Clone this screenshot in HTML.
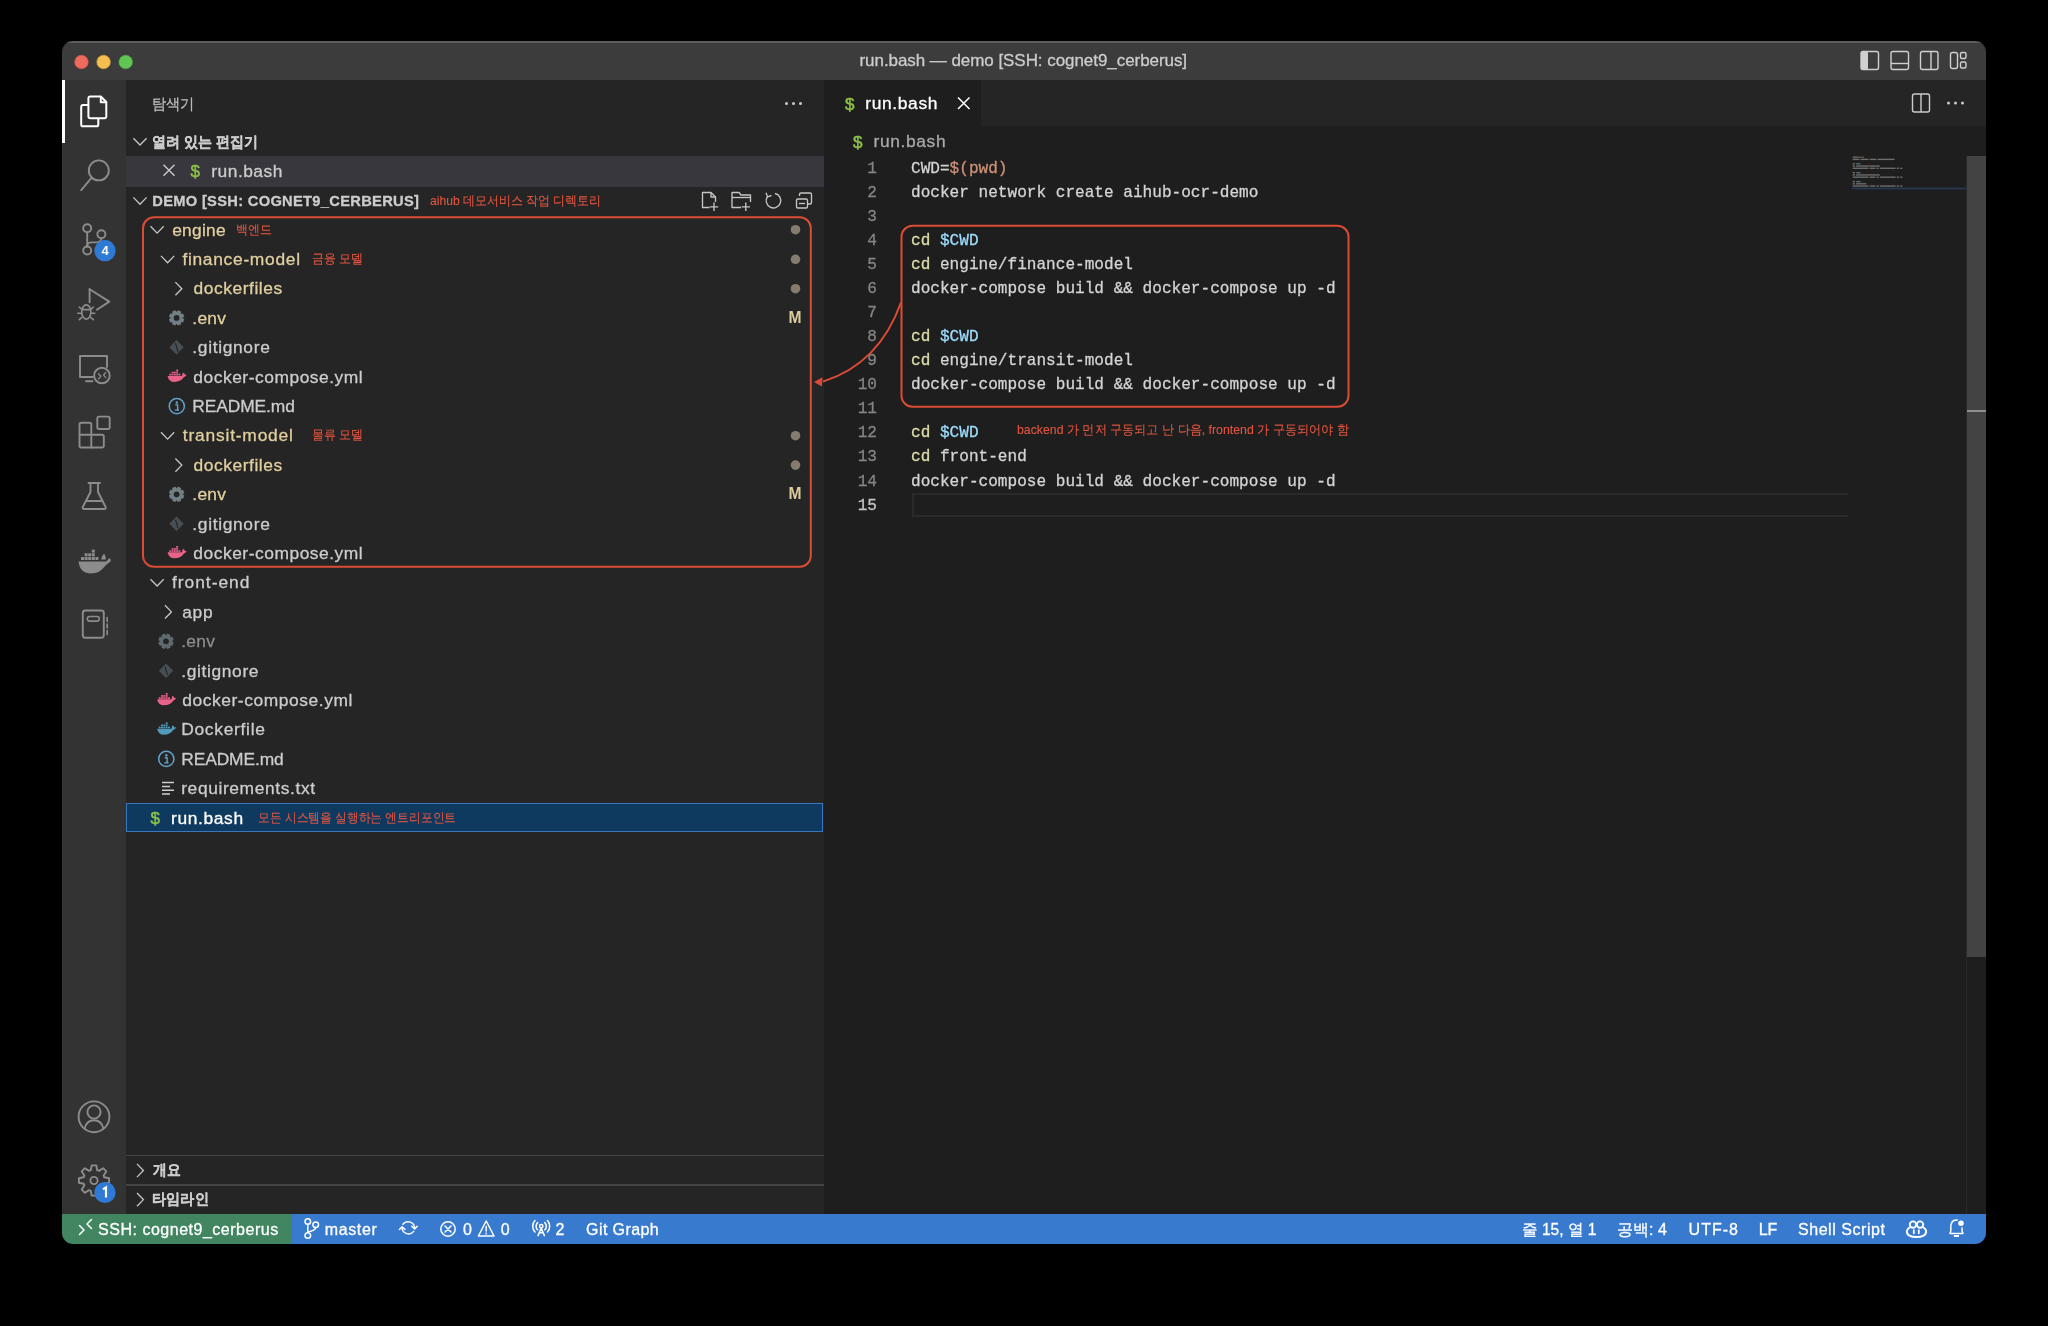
<!DOCTYPE html><html><head><meta charset='utf-8'><style>
*{box-sizing:border-box}
html,body{margin:0;padding:0;background:#000;width:2048px;height:1326px;overflow:hidden}
#win{position:absolute;left:0;top:0;width:2048px;height:1326px;clip-path:inset(41px 62px 82px 62px round 11px);will-change:transform}
.a{position:absolute}
.t{position:absolute;height:40px;line-height:40px;white-space:pre;-webkit-text-stroke:0.3px currentColor}
.a{-webkit-text-stroke:0.3px currentColor}
svg{position:absolute;overflow:visible}
</style></head><body><div id=win>
<div class=a style="left:62px;top:41px;width:1924px;height:39px;background:#3c3c3c;"></div>
<div class=a style="left:62px;top:41px;width:1924px;height:1.5px;background:#5e5e5e;"></div>
<div class=a style="left:62px;top:80px;width:63.5px;height:1134px;background:#333333;"></div>
<div class=a style="left:125.5px;top:80px;width:698.0px;height:1134px;background:#252526;"></div>
<div class=a style="left:823.5px;top:80px;width:1162.5px;height:1134px;background:#1e1e1e;"></div>
<div class=a style="left:823.5px;top:80px;width:1162.5px;height:45.599999999999994px;background:#252526;"></div>
<div class=a style="left:823.5px;top:80px;width:157.70000000000005px;height:45.599999999999994px;background:#1e1e1e;"></div>
<div class=a style="left:62px;top:1214px;width:1924px;height:30px;background:#387ace;"></div>
<div class=a style="left:62px;top:1214px;width:229.7px;height:30px;background:#418660;"></div>
<div class=a style="left:62px;top:80px;width:3px;height:63px;background:#ffffff;"></div>
<div class=a style="left:125.5px;top:156.4px;width:698.0px;height:30.400000000000006px;background:#37373d;"></div>
<div class=a style="left:126px;top:802.5px;width:697px;height:29.0px;background:#0f3a60;border:1.5px solid #3a76bd"></div>
<div class=a style="left:125.5px;top:1154.8px;width:698.0px;height:1.6000000000001364px;background:#444444;"></div>
<div class=a style="left:125.5px;top:1184.2px;width:698.0px;height:1.599999999999909px;background:#444444;"></div>
<svg class=a style="left:0;top:0" width="2048" height="1326"><circle cx="81.5" cy="62" r="6.8" fill="#ed6a5e" stroke="#d5554a" stroke-width="0.6"/><circle cx="103.6" cy="62" r="6.8" fill="#f5bf4f" stroke="#d9a53c" stroke-width="0.6"/><circle cx="125.7" cy="62" r="6.8" fill="#61c554" stroke="#4ea843" stroke-width="0.6"/><g fill="none" stroke="#cfcfcf" stroke-width="1.4"><rect x="1861" y="51.5" width="17.5" height="18" rx="2"/><rect x="1891" y="51.5" width="17.5" height="18" rx="2"/><line x1="1891" y1="63.5" x2="1908.5" y2="63.5"/><rect x="1920.5" y="51.5" width="17.5" height="18" rx="2"/><line x1="1931" y1="51.5" x2="1931" y2="69.5"/><rect x="1950.5" y="52.5" width="7" height="16" rx="2"/><rect x="1960.5" y="52.5" width="5.5" height="6" rx="1.5"/><rect x="1960.5" y="62" width="5.5" height="6" rx="1.5"/></g><rect x="1861" y="51.5" width="7" height="18" rx="1.5" fill="#cfcfcf"/><g fill="none" stroke="#ffffff" stroke-width="2" stroke-linejoin="round"><path d="M88.4 98.4 Q88.4 96.5 90.3 96.5 H100.8 L106.3 102 V116.3 Q106.3 118.2 104.4 118.2 H90.3 Q88.4 118.2 88.4 116.3 Z"/><path d="M100.8 96.5 V102.2 H106.3"/><path d="M88.4 105 H83.1 Q81.2 105 81.2 106.9 V124.4 Q81.2 126.3 83.1 126.3 H96.4 Q98.3 126.3 98.3 124.4 V118.2"/></g><g fill="none" stroke="#8c8c8c" stroke-width="1.9" stroke-linecap="round" stroke-linejoin="round"><circle cx="98.8" cy="170.4" r="10"/><line x1="91.5" y1="177.8" x2="81.2" y2="190.2"/><circle cx="87.2" cy="228.3" r="4"/><circle cx="101.4" cy="234.3" r="4"/><circle cx="87.2" cy="250.5" r="4"/><line x1="87.2" y1="232.1" x2="87.2" y2="246.5"/><path d="M101.4 238.1 Q101.4 242.4 96.5 242.4 H91.5 Q87.2 242.4 87.2 246.5" stroke-width="1.7"/><path d="M89.6 289.2 L109.3 301.6 L96.9 309.8"/><line x1="89.6" y1="289.2" x2="89.6" y2="302.3"/><ellipse cx="86.3" cy="312" rx="4.6" ry="7.1" stroke-width="1.6"/><path d="M79.3 307.2 L81.9 309.4 M77.8 313.3 H81.6 M79.3 319.6 L81.9 317.3 M93.3 307.2 L90.7 309.4 M94.8 313.3 H91 M93.3 319.6 L90.7 317.3 M81.8 309.6 H90.8" stroke-width="1.6"/><path d="M107 367 V356 H80 V377 H93"/><line x1="86" y1="381.3" x2="92.5" y2="381.3"/><circle cx="101.9" cy="375.5" r="7.8"/><path d="M98.5 373.7 l2.3 2.6 l-2.3 2.6 M105.8 372.4 l-2.3 2.6 l2.3 2.6" stroke-width="1.4"/><path d="M79.5 424.5 Q79.5 422.8 81.2 422.8 H89.5 Q91.3 422.8 91.3 424.5 V434.8 H102 Q103.8 434.8 103.8 436.5 V446 Q103.8 447.5 102 447.5 H81.2 Q79.5 447.5 79.5 446 Z"/><line x1="79.5" y1="434.8" x2="91.3" y2="434.8"/><line x1="91.3" y1="434.8" x2="91.3" y2="447.5"/><rect x="97.3" y="416.6" width="12.4" height="12.4" rx="1.8"/><path d="M88.5 483 H100 M90.5 483 V492 L82.8 507 Q82 509 84.5 509 H104 Q106.5 509 105.6 507 L98 492 V483"/><line x1="86" y1="501" x2="102.5" y2="501"/><rect x="82.8" y="610.5" width="21" height="27.2" rx="2.5"/><rect x="87.3" y="616.5" width="12" height="4.6" rx="2.3" stroke-width="1.6"/><path d="M107.2 617.5 v4 M107.2 624 v4 M107.2 630.5 v4" stroke-width="1.6"/><circle cx="94" cy="1116.8" r="15.4"/><circle cx="94" cy="1112" r="6.6"/><path d="M84.6 1128.5 Q86.5 1120.2 94 1120.2 Q101.5 1120.2 103.4 1128.5"/></g><g fill="#8c8c8c"><path d="M78.5 561.5 H106 Q108 560 109 558 Q111.5 559.5 110.5 561.5 Q107 564 105 566 Q100 573.5 91 573.5 Q80 573.5 78.5 561.5 Z"/><rect x="81" y="557" width="3" height="3"/><rect x="84.6" y="557" width="3" height="3"/><rect x="88.2" y="557" width="3" height="3"/><rect x="91.8" y="557" width="3" height="3"/><rect x="95.4" y="557" width="3" height="3"/><rect x="84.6" y="553.3" width="3" height="3"/><rect x="88.2" y="553.3" width="3" height="3"/><rect x="91.8" y="553.3" width="3" height="3"/><rect x="91.8" y="549.6" width="3" height="3"/><path d="M101 559.5 Q102.5 555 104 553.5 Q106 556 106 559.5 Z"/></g><polygon points="109.1,1178.2 109.1,1182.8 104.3,1183.7 103.6,1185.5 106.3,1189.6 103.1,1192.8 99.0,1190.1 97.2,1190.8 96.3,1195.6 91.7,1195.6 90.8,1190.8 89.0,1190.1 84.9,1192.8 81.7,1189.6 84.4,1185.5 83.7,1183.7 78.9,1182.8 78.9,1178.2 83.7,1177.3 84.4,1175.5 81.7,1171.4 84.9,1168.2 89.0,1170.9 90.8,1170.2 91.7,1165.4 96.3,1165.4 97.2,1170.2 99.0,1170.9 103.1,1168.2 106.3,1171.4 103.6,1175.5 104.3,1177.3" fill="none" stroke="#8c8c8c" stroke-width="1.9" stroke-linejoin="round"/><circle cx="94" cy="1180.5" r="3.6" fill="none" stroke="#8c8c8c" stroke-width="1.9"/><circle cx="105" cy="250.7" r="10.6" fill="#2f7ad4" stroke="#333333" stroke-width="0"/><circle cx="105" cy="1192.5" r="10.6" fill="#2f7ad4"/><path d="M133.4 138.2 L140.0 145.0 L146.6 138.2" fill="none" stroke="#c5c5c5" stroke-width="1.35"/><path d="M133.4 197.4 L140.0 204.2 L146.6 197.4" fill="none" stroke="#c5c5c5" stroke-width="1.35"/><path d="M150.5 226.3 L157.1 233.1 L163.7 226.3" fill="none" stroke="#c5c5c5" stroke-width="1.35"/><path d="M161.0 255.9 L167.6 262.7 L174.2 255.9" fill="none" stroke="#c5c5c5" stroke-width="1.35"/><path d="M175.4 282.1 L181.8 288.7 L175.4 295.3" fill="none" stroke="#c5c5c5" stroke-width="1.35"/><path d="M161.0 432.3 L167.6 439.1 L174.2 432.3" fill="none" stroke="#c5c5c5" stroke-width="1.35"/><path d="M175.4 458.5 L181.8 465.1 L175.4 471.7" fill="none" stroke="#c5c5c5" stroke-width="1.35"/><path d="M150.5 579.2 L157.1 586.0 L163.7 579.2" fill="none" stroke="#c5c5c5" stroke-width="1.35"/><path d="M165.0 605.3 L171.4 611.9 L165.0 618.5" fill="none" stroke="#c5c5c5" stroke-width="1.35"/><path d="M137.0 1163.9 L143.4 1170.5 L137.0 1177.1" fill="none" stroke="#c5c5c5" stroke-width="1.35"/><path d="M137.0 1193.0 L143.4 1199.6 L137.0 1206.2" fill="none" stroke="#c5c5c5" stroke-width="1.35"/><path d="M163.5 164.8 L174.5 175.8 M174.5 164.8 L163.5 175.8" stroke="#cccccc" stroke-width="1.4"/><text x="190.5" y="177.2" font-family="Liberation Sans" font-weight="400" font-size="17" fill="#8dc149" stroke="#8dc149" stroke-width="0.5">$</text><text x="150.5" y="823.7" font-family="Liberation Sans" font-weight="400" font-size="17" fill="#8dc149" stroke="#8dc149" stroke-width="0.5">$</text><text x="845" y="109.7" font-family="Liberation Sans" font-weight="400" font-size="17" fill="#8dc149" stroke="#8dc149" stroke-width="0.5">$</text><text x="853" y="147.7" font-family="Liberation Sans" font-weight="400" font-size="17" fill="#8dc149" stroke="#8dc149" stroke-width="0.5">$</text><circle cx="786.5" cy="103.5" r="1.5" fill="#cccccc"/><circle cx="793.5" cy="103.5" r="1.5" fill="#cccccc"/><circle cx="800.5" cy="103.5" r="1.5" fill="#cccccc"/><g fill="none" stroke="#c5c5c5" stroke-width="1.35" stroke-linejoin="round"><path d="M709.5 207.5 H702.5 V192.5 H711 L715.5 197 V202"/><path d="M711 192.5 V197 H715.5"/><path d="M714 202.5 V211 M709.8 206.8 H718.2"/><path d="M741 207.5 H732 V192.5 H739 L741 195 H750.5 V202"/><path d="M732 197.5 H750.5"/><path d="M745.8 202.5 V211 M741.6 206.8 H750"/><path d="M767.5 196.5 A7.3 7.3 0 1 0 775 193.5"/><path d="M766 192.8 L767.5 196.8 L771.5 195.5"/><rect x="796.5" y="199" width="11" height="9" rx="1.5"/><path d="M799.5 196 V194.5 Q799.5 193 801 193 H810 Q811.5 193 811.5 194.5 V202.5 Q811.5 204 810 204 H808"/><path d="M799 203.5 H805"/></g><circle cx="795.5" cy="229.7" r="4.8" fill="#847d6d"/><circle cx="795.5" cy="259.3" r="4.8" fill="#847d6d"/><circle cx="795.5" cy="288.7" r="4.8" fill="#847d6d"/><circle cx="795.5" cy="435.7" r="4.8" fill="#847d6d"/><circle cx="795.5" cy="465.1" r="4.8" fill="#847d6d"/><text x="788.5" y="322.6" font-family="Liberation Sans" font-weight="700" font-size="16.6" fill="#dccb9c" textLength="13" lengthAdjust="spacingAndGlyphs">M</text><text x="788.5" y="499.0" font-family="Liberation Sans" font-weight="700" font-size="16.6" fill="#dccb9c" textLength="13" lengthAdjust="spacingAndGlyphs">M</text><polygon points="184.3,319.2 183.0,322.4 180.5,322.0 180.7,321.8 181.1,324.3 177.9,325.6 176.4,323.5 176.8,323.5 175.3,325.6 172.1,324.3 172.5,321.8 172.7,322.0 170.2,322.4 168.9,319.2 171.0,317.7 171.0,318.1 168.9,316.6 170.2,313.4 172.7,313.8 172.5,314.0 172.1,311.5 175.3,310.2 176.8,312.3 176.4,312.3 177.9,310.2 181.1,311.5 180.7,314.0 180.5,313.8 183.0,313.4 184.3,316.6 182.2,318.1 182.2,317.7" fill="#727f84"/><circle cx="176.6" cy="317.9" r="2.9" fill="#252526"/><path d="M176.5 340.09999999999997 L183.7 347.29999999999995 L176.5 354.49999999999994 L169.3 347.29999999999995 Z" fill="#454f54"/><path d="M175.5 343.29999999999995 L178.0 351.79999999999995" stroke="#252526" stroke-width="1.2"/><g fill="#e8628a" transform="translate(167.3,370.5)"><path d="M0.3 5.4 H14.6 Q15.1 3.6 15.6 1.9 Q17.4 2.9 17.8 4.2 Q19 3.8 19.4 4.2 Q18.6 6 16.2 7 Q13.2 11.4 7.2 11.4 Q1.4 11.4 0.3 5.4 Z"/><rect x="2" y="3.3" width="1.9" height="1.7"/><rect x="4.3" y="3.3" width="1.9" height="1.7"/><rect x="6.6" y="3.3" width="1.9" height="1.7"/><rect x="8.9" y="3.3" width="1.9" height="1.7"/><rect x="11.2" y="3.3" width="1.9" height="1.7"/><rect x="4.3" y="1.2" width="1.9" height="1.7"/><rect x="6.6" y="1.2" width="1.9" height="1.7"/><rect x="8.9" y="1.2" width="1.9" height="1.7"/><rect x="8.9" y="-0.9" width="1.9" height="1.7"/></g><circle cx="176.8" cy="406.09999999999997" r="7.6" fill="none" stroke="#64a3c8" stroke-width="1.5"/><circle cx="176.8" cy="402.49999999999994" r="1.2" fill="#64a3c8"/><path d="M175.20000000000002 404.9 H177.60000000000002 V409.7 H178.8 M174.8 410.09999999999997 H179.0" fill="none" stroke="#64a3c8" stroke-width="1.4"/><polygon points="184.3,495.6 183.0,498.8 180.5,498.4 180.7,498.2 181.1,500.7 177.9,502.0 176.4,499.9 176.8,499.9 175.3,502.0 172.1,500.7 172.5,498.2 172.7,498.4 170.2,498.8 168.9,495.6 171.0,494.1 171.0,494.5 168.9,493.0 170.2,489.8 172.7,490.2 172.5,490.4 172.1,487.9 175.3,486.6 176.8,488.7 176.4,488.7 177.9,486.6 181.1,487.9 180.7,490.4 180.5,490.2 183.0,489.8 184.3,493.0 182.2,494.5 182.2,494.1" fill="#727f84"/><circle cx="176.6" cy="494.29999999999995" r="2.9" fill="#252526"/><path d="M176.5 516.5 L183.7 523.7 L176.5 530.9000000000001 L169.3 523.7 Z" fill="#454f54"/><path d="M175.5 519.7 L178.0 528.2" stroke="#252526" stroke-width="1.2"/><g fill="#e8628a" transform="translate(167.3,546.8999999999999)"><path d="M0.3 5.4 H14.6 Q15.1 3.6 15.6 1.9 Q17.4 2.9 17.8 4.2 Q19 3.8 19.4 4.2 Q18.6 6 16.2 7 Q13.2 11.4 7.2 11.4 Q1.4 11.4 0.3 5.4 Z"/><rect x="2" y="3.3" width="1.9" height="1.7"/><rect x="4.3" y="3.3" width="1.9" height="1.7"/><rect x="6.6" y="3.3" width="1.9" height="1.7"/><rect x="8.9" y="3.3" width="1.9" height="1.7"/><rect x="11.2" y="3.3" width="1.9" height="1.7"/><rect x="4.3" y="1.2" width="1.9" height="1.7"/><rect x="6.6" y="1.2" width="1.9" height="1.7"/><rect x="8.9" y="1.2" width="1.9" height="1.7"/><rect x="8.9" y="-0.9" width="1.9" height="1.7"/></g><polygon points="173.7,642.6 172.4,645.8 169.9,645.4 170.1,645.2 170.5,647.7 167.3,649.0 165.8,646.9 166.2,646.9 164.7,649.0 161.5,647.7 161.9,645.2 162.1,645.4 159.6,645.8 158.3,642.6 160.4,641.1 160.4,641.5 158.3,640.0 159.6,636.8 162.1,637.2 161.9,637.4 161.5,634.9 164.7,633.6 166.2,635.7 165.8,635.7 167.3,633.6 170.5,634.9 170.1,637.4 169.9,637.2 172.4,636.8 173.7,640.0 171.6,641.5 171.6,641.1" fill="#5e6a6e"/><circle cx="166" cy="641.3" r="2.9" fill="#252526"/><path d="M166 663.5 L173.2 670.7 L166 677.9000000000001 L158.8 670.7 Z" fill="#454f54"/><path d="M165 666.7 L167.5 675.2" stroke="#252526" stroke-width="1.2"/><g fill="#e8628a" transform="translate(156.8,693.8999999999999)"><path d="M0.3 5.4 H14.6 Q15.1 3.6 15.6 1.9 Q17.4 2.9 17.8 4.2 Q19 3.8 19.4 4.2 Q18.6 6 16.2 7 Q13.2 11.4 7.2 11.4 Q1.4 11.4 0.3 5.4 Z"/><rect x="2" y="3.3" width="1.9" height="1.7"/><rect x="4.3" y="3.3" width="1.9" height="1.7"/><rect x="6.6" y="3.3" width="1.9" height="1.7"/><rect x="8.9" y="3.3" width="1.9" height="1.7"/><rect x="11.2" y="3.3" width="1.9" height="1.7"/><rect x="4.3" y="1.2" width="1.9" height="1.7"/><rect x="6.6" y="1.2" width="1.9" height="1.7"/><rect x="8.9" y="1.2" width="1.9" height="1.7"/><rect x="8.9" y="-0.9" width="1.9" height="1.7"/></g><g fill="#519aba" transform="translate(156.8,723.3)"><path d="M0.3 5.4 H14.6 Q15.1 3.6 15.6 1.9 Q17.4 2.9 17.8 4.2 Q19 3.8 19.4 4.2 Q18.6 6 16.2 7 Q13.2 11.4 7.2 11.4 Q1.4 11.4 0.3 5.4 Z"/><rect x="2" y="3.3" width="1.9" height="1.7"/><rect x="4.3" y="3.3" width="1.9" height="1.7"/><rect x="6.6" y="3.3" width="1.9" height="1.7"/><rect x="8.9" y="3.3" width="1.9" height="1.7"/><rect x="11.2" y="3.3" width="1.9" height="1.7"/><rect x="4.3" y="1.2" width="1.9" height="1.7"/><rect x="6.6" y="1.2" width="1.9" height="1.7"/><rect x="8.9" y="1.2" width="1.9" height="1.7"/><rect x="8.9" y="-0.9" width="1.9" height="1.7"/></g><circle cx="166.3" cy="758.8999999999999" r="7.6" fill="none" stroke="#64a3c8" stroke-width="1.5"/><circle cx="166.3" cy="755.2999999999998" r="1.2" fill="#64a3c8"/><path d="M164.70000000000002 757.6999999999998 H167.10000000000002 V762.4999999999999 H168.3 M164.3 762.8999999999999 H168.5" fill="none" stroke="#64a3c8" stroke-width="1.4"/><path d="M162 782.5999999999999 H174 M162 786.3999999999999 H170 M162 790.1999999999999 H174 M162 793.9999999999999 H170" stroke="#cfcfcf" stroke-width="1.5"/><path d="M958 97.5 L969.5 109 M969.5 97.5 L958 109" stroke="#ffffff" stroke-width="1.5"/><g fill="none" stroke="#cccccc" stroke-width="1.4"><rect x="1912.5" y="94" width="17" height="18" rx="2"/><line x1="1921" y1="94" x2="1921" y2="112"/></g><circle cx="1948.5" cy="103" r="1.5" fill="#cccccc"/><circle cx="1955.5" cy="103" r="1.5" fill="#cccccc"/><circle cx="1962.5" cy="103" r="1.5" fill="#cccccc"/></svg>
<div class=a style="left:912px;top:493px;width:936px;height:23.5px;background:transparent;border:2px solid #2a2a2a;border-right:none"></div>
<div class=a style="left:827px;width:50px;top:156.60px;height:24.07px;text-align:right;font:17px 'Liberation Mono',monospace;line-height:24.07px;color:#858585;white-space:pre;transform-origin:100% 50%;transform:scaleX(0.9459)">1</div>
<div class=a style="left:911.3px;top:156.60px;height:24.07px;font:17px 'Liberation Mono',monospace;line-height:24.07px;color:#d4d4d4;white-space:pre;transform-origin:0 50%;transform:scaleX(0.9459)"><span style="color:#d4d4d4">CWD=</span><span style="color:#ce9178">$(pwd)</span></div>
<div class=a style="left:827px;width:50px;top:180.67px;height:24.07px;text-align:right;font:17px 'Liberation Mono',monospace;line-height:24.07px;color:#858585;white-space:pre;transform-origin:100% 50%;transform:scaleX(0.9459)">2</div>
<div class=a style="left:911.3px;top:180.67px;height:24.07px;font:17px 'Liberation Mono',monospace;line-height:24.07px;color:#d4d4d4;white-space:pre;transform-origin:0 50%;transform:scaleX(0.9459)">docker network create aihub-ocr-demo</div>
<div class=a style="left:827px;width:50px;top:204.74px;height:24.07px;text-align:right;font:17px 'Liberation Mono',monospace;line-height:24.07px;color:#858585;white-space:pre;transform-origin:100% 50%;transform:scaleX(0.9459)">3</div>
<div class=a style="left:827px;width:50px;top:228.81px;height:24.07px;text-align:right;font:17px 'Liberation Mono',monospace;line-height:24.07px;color:#858585;white-space:pre;transform-origin:100% 50%;transform:scaleX(0.9459)">4</div>
<div class=a style="left:911.3px;top:228.81px;height:24.07px;font:17px 'Liberation Mono',monospace;line-height:24.07px;color:#d4d4d4;white-space:pre;transform-origin:0 50%;transform:scaleX(0.9459)"><span style="color:#dcdcaa">cd</span> <span style="color:#9cdcfe">$CWD</span></div>
<div class=a style="left:827px;width:50px;top:252.88px;height:24.07px;text-align:right;font:17px 'Liberation Mono',monospace;line-height:24.07px;color:#858585;white-space:pre;transform-origin:100% 50%;transform:scaleX(0.9459)">5</div>
<div class=a style="left:911.3px;top:252.88px;height:24.07px;font:17px 'Liberation Mono',monospace;line-height:24.07px;color:#d4d4d4;white-space:pre;transform-origin:0 50%;transform:scaleX(0.9459)"><span style="color:#dcdcaa">cd</span> engine/finance-model</div>
<div class=a style="left:827px;width:50px;top:276.95px;height:24.07px;text-align:right;font:17px 'Liberation Mono',monospace;line-height:24.07px;color:#858585;white-space:pre;transform-origin:100% 50%;transform:scaleX(0.9459)">6</div>
<div class=a style="left:911.3px;top:276.95px;height:24.07px;font:17px 'Liberation Mono',monospace;line-height:24.07px;color:#d4d4d4;white-space:pre;transform-origin:0 50%;transform:scaleX(0.9459)">docker-compose build &amp;&amp; docker-compose up -d</div>
<div class=a style="left:827px;width:50px;top:301.02px;height:24.07px;text-align:right;font:17px 'Liberation Mono',monospace;line-height:24.07px;color:#858585;white-space:pre;transform-origin:100% 50%;transform:scaleX(0.9459)">7</div>
<div class=a style="left:827px;width:50px;top:325.09px;height:24.07px;text-align:right;font:17px 'Liberation Mono',monospace;line-height:24.07px;color:#858585;white-space:pre;transform-origin:100% 50%;transform:scaleX(0.9459)">8</div>
<div class=a style="left:911.3px;top:325.09px;height:24.07px;font:17px 'Liberation Mono',monospace;line-height:24.07px;color:#d4d4d4;white-space:pre;transform-origin:0 50%;transform:scaleX(0.9459)"><span style="color:#dcdcaa">cd</span> <span style="color:#9cdcfe">$CWD</span></div>
<div class=a style="left:827px;width:50px;top:349.16px;height:24.07px;text-align:right;font:17px 'Liberation Mono',monospace;line-height:24.07px;color:#858585;white-space:pre;transform-origin:100% 50%;transform:scaleX(0.9459)">9</div>
<div class=a style="left:911.3px;top:349.16px;height:24.07px;font:17px 'Liberation Mono',monospace;line-height:24.07px;color:#d4d4d4;white-space:pre;transform-origin:0 50%;transform:scaleX(0.9459)"><span style="color:#dcdcaa">cd</span> engine/transit-model</div>
<div class=a style="left:827px;width:50px;top:373.23px;height:24.07px;text-align:right;font:17px 'Liberation Mono',monospace;line-height:24.07px;color:#858585;white-space:pre;transform-origin:100% 50%;transform:scaleX(0.9459)">10</div>
<div class=a style="left:911.3px;top:373.23px;height:24.07px;font:17px 'Liberation Mono',monospace;line-height:24.07px;color:#d4d4d4;white-space:pre;transform-origin:0 50%;transform:scaleX(0.9459)">docker-compose build &amp;&amp; docker-compose up -d</div>
<div class=a style="left:827px;width:50px;top:397.30px;height:24.07px;text-align:right;font:17px 'Liberation Mono',monospace;line-height:24.07px;color:#858585;white-space:pre;transform-origin:100% 50%;transform:scaleX(0.9459)">11</div>
<div class=a style="left:827px;width:50px;top:421.37px;height:24.07px;text-align:right;font:17px 'Liberation Mono',monospace;line-height:24.07px;color:#858585;white-space:pre;transform-origin:100% 50%;transform:scaleX(0.9459)">12</div>
<div class=a style="left:911.3px;top:421.37px;height:24.07px;font:17px 'Liberation Mono',monospace;line-height:24.07px;color:#d4d4d4;white-space:pre;transform-origin:0 50%;transform:scaleX(0.9459)"><span style="color:#dcdcaa">cd</span> <span style="color:#9cdcfe">$CWD</span></div>
<div class=a style="left:827px;width:50px;top:445.44px;height:24.07px;text-align:right;font:17px 'Liberation Mono',monospace;line-height:24.07px;color:#858585;white-space:pre;transform-origin:100% 50%;transform:scaleX(0.9459)">13</div>
<div class=a style="left:911.3px;top:445.44px;height:24.07px;font:17px 'Liberation Mono',monospace;line-height:24.07px;color:#d4d4d4;white-space:pre;transform-origin:0 50%;transform:scaleX(0.9459)"><span style="color:#dcdcaa">cd</span> front-end</div>
<div class=a style="left:827px;width:50px;top:469.51px;height:24.07px;text-align:right;font:17px 'Liberation Mono',monospace;line-height:24.07px;color:#858585;white-space:pre;transform-origin:100% 50%;transform:scaleX(0.9459)">14</div>
<div class=a style="left:911.3px;top:469.51px;height:24.07px;font:17px 'Liberation Mono',monospace;line-height:24.07px;color:#d4d4d4;white-space:pre;transform-origin:0 50%;transform:scaleX(0.9459)">docker-compose build &amp;&amp; docker-compose up -d</div>
<div class=a style="left:827px;width:50px;top:493.58px;height:24.07px;text-align:right;font:17px 'Liberation Mono',monospace;line-height:24.07px;color:#c6c6c6;white-space:pre;transform-origin:100% 50%;transform:scaleX(0.9459)">15</div>
<svg class=a style="left:0;top:0" width="2048" height="1326"><rect x="1852" y="187.6" width="115" height="1.8" fill="#27384e"/><rect x="1852.70" y="156.50" width="4.52" height="1.35" fill="#bdbdbd" opacity="0.5"/><rect x="1857.22" y="156.50" width="6.78" height="1.35" fill="#b08a70" opacity="0.5"/><rect x="1852.70" y="158.72" width="6.78" height="1.35" fill="#bdbdbd" opacity="0.5"/><rect x="1860.61" y="158.72" width="7.91" height="1.35" fill="#bdbdbd" opacity="0.5"/><rect x="1869.65" y="158.72" width="6.78" height="1.35" fill="#bdbdbd" opacity="0.5"/><rect x="1877.56" y="158.72" width="16.95" height="1.35" fill="#bdbdbd" opacity="0.5"/><rect x="1852.70" y="163.16" width="2.26" height="1.35" fill="#c8c8a8" opacity="0.5"/><rect x="1856.09" y="163.16" width="4.52" height="1.35" fill="#8fb8d0" opacity="0.5"/><rect x="1852.70" y="165.38" width="2.26" height="1.35" fill="#c8c8a8" opacity="0.5"/><rect x="1856.09" y="165.38" width="23.73" height="1.35" fill="#bdbdbd" opacity="0.5"/><rect x="1852.70" y="167.60" width="15.82" height="1.35" fill="#bdbdbd" opacity="0.5"/><rect x="1869.65" y="167.60" width="5.65" height="1.35" fill="#bdbdbd" opacity="0.5"/><rect x="1876.43" y="167.60" width="2.26" height="1.35" fill="#bdbdbd" opacity="0.5"/><rect x="1879.82" y="167.60" width="15.82" height="1.35" fill="#bdbdbd" opacity="0.5"/><rect x="1896.77" y="167.60" width="2.26" height="1.35" fill="#bdbdbd" opacity="0.5"/><rect x="1900.16" y="167.60" width="2.26" height="1.35" fill="#bdbdbd" opacity="0.5"/><rect x="1852.70" y="172.04" width="2.26" height="1.35" fill="#c8c8a8" opacity="0.5"/><rect x="1856.09" y="172.04" width="4.52" height="1.35" fill="#8fb8d0" opacity="0.5"/><rect x="1852.70" y="174.26" width="2.26" height="1.35" fill="#c8c8a8" opacity="0.5"/><rect x="1856.09" y="174.26" width="23.73" height="1.35" fill="#bdbdbd" opacity="0.5"/><rect x="1852.70" y="176.48" width="15.82" height="1.35" fill="#bdbdbd" opacity="0.5"/><rect x="1869.65" y="176.48" width="5.65" height="1.35" fill="#bdbdbd" opacity="0.5"/><rect x="1876.43" y="176.48" width="2.26" height="1.35" fill="#bdbdbd" opacity="0.5"/><rect x="1879.82" y="176.48" width="15.82" height="1.35" fill="#bdbdbd" opacity="0.5"/><rect x="1896.77" y="176.48" width="2.26" height="1.35" fill="#bdbdbd" opacity="0.5"/><rect x="1900.16" y="176.48" width="2.26" height="1.35" fill="#bdbdbd" opacity="0.5"/><rect x="1852.70" y="180.92" width="2.26" height="1.35" fill="#c8c8a8" opacity="0.5"/><rect x="1856.09" y="180.92" width="4.52" height="1.35" fill="#8fb8d0" opacity="0.5"/><rect x="1852.70" y="183.14" width="2.26" height="1.35" fill="#c8c8a8" opacity="0.5"/><rect x="1856.09" y="183.14" width="10.17" height="1.35" fill="#bdbdbd" opacity="0.5"/><rect x="1852.70" y="185.36" width="15.82" height="1.35" fill="#bdbdbd" opacity="0.5"/><rect x="1869.65" y="185.36" width="5.65" height="1.35" fill="#bdbdbd" opacity="0.5"/><rect x="1876.43" y="185.36" width="2.26" height="1.35" fill="#bdbdbd" opacity="0.5"/><rect x="1879.82" y="185.36" width="15.82" height="1.35" fill="#bdbdbd" opacity="0.5"/><rect x="1896.77" y="185.36" width="2.26" height="1.35" fill="#bdbdbd" opacity="0.5"/><rect x="1900.16" y="185.36" width="2.26" height="1.35" fill="#bdbdbd" opacity="0.5"/></svg>
<div class=a style="left:1966.5px;top:156px;width:19.5px;height:801.3px;background:#434343;"></div>
<div class=a style="left:1966px;top:156px;width:1px;height:1058px;background:#2a2a2a;"></div>
<div class=a style="left:1967px;top:410px;width:19px;height:2px;background:#8f8f8f;"></div>
<div id="title" class=t style="left:859.50px;top:41.00px;font:400 17px 'Liberation Sans', sans-serif;color:#cccccc;letter-spacing:-0.058px;line-height:40px;">run.bash — demo [SSH: cognet9_cerberus]</div>
<div id="explorer" class=t style="left:152.35px;top:83.50px;font:400 15px 'Liberation Sans', sans-serif;color:#bbbbbb;letter-spacing:0.000px;line-height:40px;transform-origin:0 50%;transform:scaleX(0.9484);">탐색기</div>
<div id="openeds" class=t style="left:152.36px;top:121.50px;font:700 14.7px 'Liberation Sans', sans-serif;color:#cccccc;letter-spacing:0.000px;line-height:40px;transform-origin:0 50%;transform:scaleX(0.9364);">열려 있는 편집기</div>
<div id="oe_run" class=t style="left:211.30px;top:151.00px;font:400 17.4px 'Liberation Sans', sans-serif;color:#cccccc;letter-spacing:0.486px;line-height:40px;">run.bash</div>
<div id="demo" class=t style="left:152.30px;top:180.50px;font:700 14.7px 'Liberation Sans', sans-serif;color:#cccccc;letter-spacing:0.296px;line-height:40px;">DEMO [SSH: COGNET9_CERBERUS]</div>
<div id="demo_a" class=t style="left:430.00px;top:181.00px;font:400 13.2px 'Liberation Sans', sans-serif;color:#e4553f;letter-spacing:0.000px;line-height:40px;transform-origin:0 50%;transform:scaleX(0.9185);-webkit-text-stroke:0.1px currentColor;">aihub 데모서비스 작업 디렉토리</div>
<div id="r_engine" class=t style="left:172.20px;top:209.50px;font:400 17.4px 'Liberation Sans', sans-serif;color:#e0cf9f;letter-spacing:0.240px;line-height:40px;">engine</div>
<div id="r_engine_a" class=t style="left:236.08px;top:209.60px;font:400 13.2px 'Liberation Sans', sans-serif;color:#e4553f;letter-spacing:0.000px;line-height:40px;transform-origin:0 50%;transform:scaleX(0.9189);-webkit-text-stroke:0.1px currentColor;">백엔드</div>
<div id="r_fin" class=t style="left:182.40px;top:238.90px;font:400 17.4px 'Liberation Sans', sans-serif;color:#e0cf9f;letter-spacing:0.701px;line-height:40px;">finance-model</div>
<div id="r_fin_a" class=t style="left:311.78px;top:239.00px;font:400 13.2px 'Liberation Sans', sans-serif;color:#e4553f;letter-spacing:0.000px;line-height:40px;transform-origin:0 50%;transform:scaleX(0.9222);-webkit-text-stroke:0.1px currentColor;">금융 모델</div>
<div id="r_df1" class=t style="left:193.50px;top:268.30px;font:400 17.4px 'Liberation Sans', sans-serif;color:#e0cf9f;letter-spacing:0.560px;line-height:40px;">dockerfiles</div>
<div id="r_env1" class=t style="left:192.30px;top:297.70px;font:400 17.4px 'Liberation Sans', sans-serif;color:#e0cf9f;letter-spacing:0.267px;line-height:40px;">.env</div>
<div id="r_gi1" class=t style="left:192.30px;top:327.10px;font:400 17.4px 'Liberation Sans', sans-serif;color:#cccccc;letter-spacing:0.667px;line-height:40px;">.gitignore</div>
<div id="r_dc1" class=t style="left:193.30px;top:356.50px;font:400 17.4px 'Liberation Sans', sans-serif;color:#cccccc;letter-spacing:0.529px;line-height:40px;">docker-compose.yml</div>
<div id="r_rm1" class=t style="left:192.30px;top:385.90px;font:400 17.4px 'Liberation Sans', sans-serif;color:#cccccc;letter-spacing:-0.100px;line-height:40px;">README.md</div>
<div id="r_tr" class=t style="left:182.80px;top:415.30px;font:400 17.4px 'Liberation Sans', sans-serif;color:#e0cf9f;letter-spacing:0.801px;line-height:40px;">transit-model</div>
<div id="r_tr_a" class=t style="left:311.68px;top:415.40px;font:400 13.2px 'Liberation Sans', sans-serif;color:#e4553f;letter-spacing:0.000px;line-height:40px;transform-origin:0 50%;transform:scaleX(0.9223);-webkit-text-stroke:0.1px currentColor;">물류 모델</div>
<div id="r_df2" class=t style="left:193.50px;top:444.70px;font:400 17.4px 'Liberation Sans', sans-serif;color:#e0cf9f;letter-spacing:0.560px;line-height:40px;">dockerfiles</div>
<div id="r_env2" class=t style="left:192.30px;top:474.10px;font:400 17.4px 'Liberation Sans', sans-serif;color:#e0cf9f;letter-spacing:0.267px;line-height:40px;">.env</div>
<div id="r_gi2" class=t style="left:192.30px;top:503.50px;font:400 17.4px 'Liberation Sans', sans-serif;color:#cccccc;letter-spacing:0.667px;line-height:40px;">.gitignore</div>
<div id="r_dc2" class=t style="left:193.30px;top:532.90px;font:400 17.4px 'Liberation Sans', sans-serif;color:#cccccc;letter-spacing:0.529px;line-height:40px;">docker-compose.yml</div>
<div id="r_fe" class=t style="left:172.00px;top:562.30px;font:400 17.4px 'Liberation Sans', sans-serif;color:#cccccc;letter-spacing:0.975px;line-height:40px;">front-end</div>
<div id="r_app" class=t style="left:182.20px;top:591.70px;font:400 17.4px 'Liberation Sans', sans-serif;color:#cccccc;letter-spacing:0.700px;line-height:40px;">app</div>
<div id="r_env3" class=t style="left:181.20px;top:621.10px;font:400 17.4px 'Liberation Sans', sans-serif;color:#8c8c8c;letter-spacing:0.333px;line-height:40px;">.env</div>
<div id="r_gi3" class=t style="left:181.20px;top:650.50px;font:400 17.4px 'Liberation Sans', sans-serif;color:#cccccc;letter-spacing:0.644px;line-height:40px;">.gitignore</div>
<div id="r_dc3" class=t style="left:182.20px;top:679.90px;font:400 17.4px 'Liberation Sans', sans-serif;color:#cccccc;letter-spacing:0.576px;line-height:40px;">docker-compose.yml</div>
<div id="r_dock" class=t style="left:181.20px;top:709.30px;font:400 17.4px 'Liberation Sans', sans-serif;color:#cccccc;letter-spacing:0.711px;line-height:40px;">Dockerfile</div>
<div id="r_rm3" class=t style="left:181.20px;top:738.70px;font:400 17.4px 'Liberation Sans', sans-serif;color:#cccccc;letter-spacing:-0.098px;line-height:40px;">README.md</div>
<div id="r_req" class=t style="left:181.20px;top:768.10px;font:400 17.4px 'Liberation Sans', sans-serif;color:#cccccc;letter-spacing:0.614px;line-height:40px;">requirements.txt</div>
<div id="r_run" class=t style="left:171.00px;top:797.50px;font:400 17.4px 'Liberation Sans', sans-serif;color:#ffffff;letter-spacing:0.628px;line-height:40px;">run.bash</div>
<div id="r_run_a" class=t style="left:258.10px;top:797.60px;font:400 13.2px 'Liberation Sans', sans-serif;color:#e4553f;letter-spacing:0.000px;line-height:40px;transform-origin:0 50%;transform:scaleX(0.9042);-webkit-text-stroke:0.1px currentColor;">모든 시스템을 실행하는 엔트리포인트</div>
<div id="outline" class=t style="left:153.10px;top:1150.30px;font:700 14.7px 'Liberation Sans', sans-serif;color:#cccccc;letter-spacing:0.000px;line-height:40px;transform-origin:0 50%;transform:scaleX(0.9203);">개요</div>
<div id="timeline" class=t style="left:152.16px;top:1179.40px;font:700 14.7px 'Liberation Sans', sans-serif;color:#cccccc;letter-spacing:0.000px;line-height:40px;transform-origin:0 50%;transform:scaleX(0.9449);">타임라인</div>
<div id="tab" class=t style="left:865.30px;top:83.00px;font:400 17.4px 'Liberation Sans', sans-serif;color:#ffffff;letter-spacing:0.628px;line-height:40px;">run.bash</div>
<div id="bc" class=t style="left:873.50px;top:121.00px;font:400 17.4px 'Liberation Sans', sans-serif;color:#a9a9a9;letter-spacing:0.628px;line-height:40px;">run.bash</div>
<div id="ed_a" class=t style="left:1017.00px;top:410.20px;font:400 13.2px 'Liberation Sans', sans-serif;color:#e4553f;letter-spacing:0.000px;line-height:40px;transform-origin:0 50%;transform:scaleX(0.9324);-webkit-text-stroke:0.1px currentColor;">backend 가 먼저 구동되고 난 다음, frontend 가 구동되어야 함</div>
<div id="sb_ssh" class=t style="left:98.10px;top:1209.80px;font:400 16px 'Liberation Sans', sans-serif;color:#ffffff;letter-spacing:0.510px;line-height:40px;">SSH: cognet9_cerberus</div>
<div id="sb_master" class=t style="left:324.70px;top:1209.80px;font:400 16px 'Liberation Sans', sans-serif;color:#ffffff;letter-spacing:0.640px;line-height:40px;">master</div>
<div id="sb_e0" class=t style="left:463.00px;top:1209.80px;font:400 16px 'Liberation Sans', sans-serif;color:#ffffff;letter-spacing:-1.600px;line-height:40px;">0</div>
<div id="sb_w0" class=t style="left:500.70px;top:1209.80px;font:400 16px 'Liberation Sans', sans-serif;color:#ffffff;letter-spacing:-2.000px;line-height:40px;">0</div>
<div id="sb_2" class=t style="left:555.40px;top:1209.80px;font:400 16px 'Liberation Sans', sans-serif;color:#ffffff;letter-spacing:-1.600px;line-height:40px;">2</div>
<div id="sb_gg" class=t style="left:586.10px;top:1209.80px;font:400 16px 'Liberation Sans', sans-serif;color:#ffffff;letter-spacing:0.400px;line-height:40px;">Git Graph</div>
<div id="sb_ln" class=t style="left:1522.03px;top:1209.80px;font:400 16px 'Liberation Sans', sans-serif;color:#ffffff;letter-spacing:0.000px;line-height:40px;transform-origin:0 50%;transform:scaleX(0.9733);">줄 15, 열 1</div>
<div id="sb_sp" class=t style="left:1617.00px;top:1209.80px;font:400 16px 'Liberation Sans', sans-serif;color:#ffffff;letter-spacing:0.000px;line-height:40px;">공백: 4</div>
<div id="sb_utf" class=t style="left:1688.60px;top:1209.80px;font:400 16px 'Liberation Sans', sans-serif;color:#ffffff;letter-spacing:1.000px;line-height:40px;">UTF-8</div>
<div id="sb_lf" class=t style="left:1758.80px;top:1209.80px;font:400 16px 'Liberation Sans', sans-serif;color:#ffffff;letter-spacing:-0.200px;line-height:40px;">LF</div>
<div id="sb_sh" class=t style="left:1798.00px;top:1209.80px;font:400 16px 'Liberation Sans', sans-serif;color:#ffffff;letter-spacing:0.545px;line-height:40px;">Shell Script</div>
<svg class=a style="left:0;top:0" width="2048" height="1326"><rect x="143" y="217.2" width="667.8" height="349.5" rx="11" fill="none" stroke="#dc4b35" stroke-width="2"/><rect x="901.5" y="225.8" width="447" height="181" rx="11" fill="none" stroke="#dc4b35" stroke-width="2"/><path d="M901 302.5 Q879 364 823 381.5" fill="none" stroke="#dc4b35" stroke-width="2"/><path d="M814 382 L822.5 377.2 L821.8 386.6 Z" fill="#dc4b35"/><text x="105" y="255.3" text-anchor="middle" font-family="Liberation Sans" font-weight="700" font-size="13" fill="#fff">4</text><path d="M103 1189.3 L106 1187.5 V1197.5" fill="none" stroke="#fff" stroke-width="2.2"/></svg>
<svg class=a style="left:0;top:0" width="2048" height="1326"><g fill="none" stroke="#ffffff" stroke-width="1.5" stroke-linecap="round" stroke-linejoin="round"><path d="M79.5 1225.5 L84 1230 L79.5 1234.5"/><path d="M91.5 1219.5 L87 1224 L91.5 1228.5"/><circle cx="307.8" cy="1221.5" r="2.8"/><circle cx="315.7" cy="1224.8" r="2.8"/><circle cx="307.8" cy="1235.5" r="2.8"/><path d="M307.8 1224.3 V1232.7"/><path d="M315.7 1227.6 Q315.7 1230.5 308 1232"/><path d="M402.9 1224.2 A6.6 6.6 0 0 1 414.6 1228.3"/><path d="M411.8 1226.3 L414.6 1229 L417.2 1226.3"/><path d="M413.7 1231.4 A6.6 6.6 0 0 1 402 1228"/><path d="M399.5 1229.4 L402 1226.7 L404.9 1229.4"/><circle cx="448" cy="1229" r="7.2"/><path d="M445 1226 L451 1232 M451 1226 L445 1232"/><path d="M486.2 1221 L494 1236 H478.4 Z"/><path d="M486.2 1226.5 V1231" /><circle cx="486.2" cy="1233.5" r="0.3"/><circle cx="541.2" cy="1226.2" r="1.7"/><path d="M541.2 1228.2 L538 1235.6 M541.2 1228.2 L544.4 1235.6 M539.3 1232.8 H543.1"/><path d="M537.6 1222.6 A5 5 0 0 0 537.6 1229.8 M544.8 1222.6 A5 5 0 0 1 544.8 1229.8"/><path d="M535 1220.5 A8.2 8.2 0 0 0 535 1231.9 M547.4 1220.5 A8.2 8.2 0 0 1 547.4 1231.9"/><circle cx="1913" cy="1224.6" r="3.2" stroke-width="1.9"/><circle cx="1920" cy="1224.6" r="3.2" stroke-width="1.9"/><path d="M1909.7 1227.5 Q1906.8 1229 1906.8 1232 Q1907.5 1237 1916.5 1237 Q1925.5 1237 1926.2 1232 Q1926.2 1229 1923.3 1227.5" stroke-width="1.9"/><path d="M1913.8 1230.2 V1233.2 M1918.8 1230.2 V1233.2" stroke-width="1.8"/><path d="M1950 1233.6 H1963 L1962 1231 V1227.5 Q1962 1220 1956.2 1220 Q1950.8 1220 1950.8 1227.5 V1231 Z"/><path d="M1954.6 1236 H1958.2" stroke-width="1.8"/></g><circle cx="1961" cy="1223.2" r="3.6" fill="#ffffff" stroke="#387ace" stroke-width="1.6"/></svg>
</div></body></html>
